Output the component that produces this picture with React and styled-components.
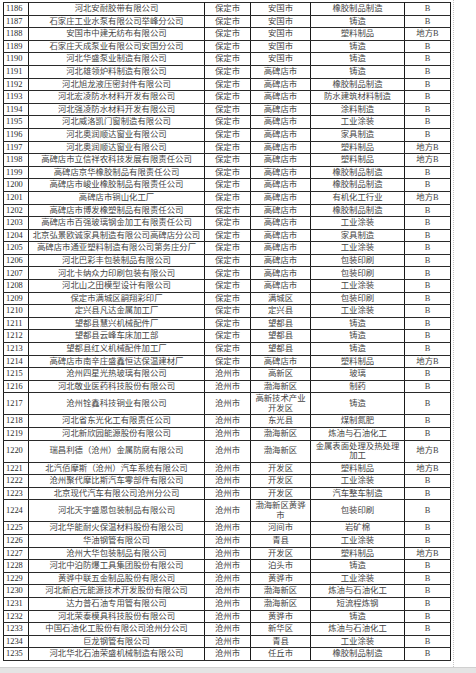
import React from 'react';
import styled, { createGlobalStyle } from 'styled-components';

const GlobalStyle = createGlobalStyle`
  html, body {
    margin: 0;
    padding: 0;
    background: #ffffff;
  }
`;

const Page = styled.div`
  width: 476px;
  height: 673px;
  overflow: hidden;
  background: #ffffff;
  display: flex;
  flex-direction: column;
`;

const Sheet = styled.div`
  width: 454px;
  height: 667px;
  padding: 2px 0 0 3px;
  box-sizing: border-box;
  border-right: 1px dotted #c4c4c4;
`;

const PageGap = styled.div`
  flex: 1;
  background: #e4e4e4;
  border-top: 1px solid #d0d0d0;
`;

const Table = styled.table`
  border-collapse: collapse;
  table-layout: fixed;
  width: 447px;
  font-family: "Liberation Serif", "Noto Sans CJK SC", serif;
  font-size: 8.4px;
  color: #454545;
  border-left: 1.5px solid #1a1a1a;
  border-right: 1.5px solid #1a1a1a;
`;

const Row = styled.tr`
  height: ${(p) => (p.$tall ? '22px' : '12.6px')};
`;

const Cell = styled.td`
  padding: 0 1px;
  border-top: 1px solid #2a2a2a;
  border-bottom: 1px solid #2a2a2a;
  border-right: ${(p) => (p.$heavy ? '1.5px' : '1px')} solid #1a1a1a;
  text-align: ${(p) => (p.$left ? 'left' : 'center')};
  padding-left: ${(p) => (p.$left ? '2px' : '1px')};
  color: ${(p) => (p.$left ? '#2a2a2a' : 'inherit')};
  line-height: 9.5px;
  white-space: nowrap;
  overflow: hidden;
  vertical-align: middle;
`;

const widths = [25, 176, 46, 60, 94, 46];

const rows = [
  ['1186', '河北安耐胶带有限公司', '保定市', '安国市', '橡胶制品制造', 'B'],
  ['1187', '石家庄工业水泵有限公司举峰分公司', '保定市', '安国市', '铸造', 'B'],
  ['1188', '安国市中建无纺布有限公司', '保定市', '安国市', '塑料制品', '地方B'],
  ['1189', '石家庄天成泵业有限公司安国分公司', '保定市', '安国市', '铸造', 'B'],
  ['1190', '河北华盛泵业制造有限公司', '保定市', '安国市', '铸造', 'B'],
  ['1191', '河北雄领炉料制造有限公司', '保定市', '高碑店市', '铸造', 'B'],
  ['1192', '河北旭龙液压密封件有限公司', '保定市', '高碑店市', '橡胶制品制造', 'B'],
  ['1193', '河北宏凌防水材料开发有限公司', '保定市', '高碑店市', '防水建筑材料制造', 'B'],
  ['1194', '河北强凌防水材料开发有限公司', '保定市', '高碑店市', '涂料制造', 'B'],
  ['1195', '河北威洛凯门窗制造有限公司', '保定市', '高碑店市', '工业涂装', 'B'],
  ['1196', '河北奥润顺达窗业有限公司', '保定市', '高碑店市', '家具制造', 'B'],
  ['1197', '河北奥润顺达窗业有限公司', '保定市', '高碑店市', '塑料制品', '地方B'],
  ['1198', '高碑店市立信祥农科技发展有限责任公司', '保定市', '高碑店市', '塑料制品', '地方B'],
  ['1199', '高碑店京华橡胶制品有限责任公司', '保定市', '高碑店市', '橡胶制品制造', 'B'],
  ['1200', '高碑店市峻业橡胶制品有限责任公司', '保定市', '高碑店市', '橡胶制品制造', 'B'],
  ['1201', '高碑店市铜山化工厂', '保定市', '高碑店市', '有机化工行业', '地方B'],
  ['1202', '高碑店市博发橡塑制品有限责任公司', '保定市', '高碑店市', '橡胶制品制造', 'B'],
  ['1203', '高碑店市百强玻璃钢金加工有限责任公司', '保定市', '高碑店市', '工业涂装', 'B'],
  ['1204', '北京弘景欧诚家具制造有限公司高碑店分公司', '保定市', '高碑店市', '家具制造', 'B'],
  ['1205', '高碑店市通亚塑料制造有限公司第务庄分厂', '保定市', '高碑店市', '工业涂装', 'B'],
  ['1206', '河北巴彩丰包装制品有限公司', '保定市', '高碑店市', '包装印刷', 'B'],
  ['1207', '河北卡纳众力印刷包装有限公司', '保定市', '高碑店市', '包装印刷', 'B'],
  ['1208', '河北山之田模型设计有限公司', '保定市', '高碑店市', '工业涂装', 'B'],
  ['1209', '保定市满城区嗣翔彩印厂', '保定市', '满城区', '包装印刷', 'B'],
  ['1210', '定兴县凡达金属加工厂', '保定市', '定兴县', '工业涂装', 'B'],
  ['1211', '望都县慧兴机械配件厂', '保定市', '望都县', '铸造', 'B'],
  ['1212', '望都县云峰车床加工部', '保定市', '望都县', '铸造', 'B'],
  ['1213', '望都县红义机械配件加工厂', '保定市', '望都县', '铸造', 'B'],
  ['1214', '高碑店市南辛庄盛鑫恒达保温建材厂', '保定市', '高碑店市', '塑料制品', '地方B'],
  ['1215', '沧州四星光热玻璃有限公司', '沧州市', '高新区', '玻璃', 'B'],
  ['1216', '河北敬业医药科技股份有限公司', '沧州市', '渤海新区', '制药', 'B'],
  ['1217', '沧州铨鑫科技铜业有限公司', '沧州市', ['高新技术产业', '开发区'], '铸造', 'B'],
  ['1218', '河北省东光化工有限责任公司', '沧州市', '东光县', '煤制氮肥', 'B'],
  ['1219', '河北新欣园能源股份有限公司', '沧州市', '渤海新区', '炼油与石油化工', 'B'],
  ['1220', '瑞昌利德（沧州）金属防腐有限公司', '沧州市', '渤海新区', ['金属表面处理及热处理', '加工'], '地方B'],
  ['1221', '北汽佰摩斯（沧州）汽车系统有限公司', '沧州市', '开发区', '塑料制品', '地方B'],
  ['1222', '沧州聚代摩比斯汽车零部件有限公司', '沧州市', '开发区', '工业涂装', 'B'],
  ['1223', '北京现代汽车有限公司沧州分公司', '沧州市', '开发区', '汽车整车制造', 'B'],
  ['1224', '河北天宇盛恩包装制品有限公司', '沧州市', ['渤海新区黄骅', '市'], '包装印刷', 'B'],
  ['1225', '河北华能耐火保温材料股份有限公司', '沧州市', '河间市', '岩矿棉', 'B'],
  ['1226', '华油钢管有限公司', '沧州市', '青县', '工业涂装', 'B'],
  ['1227', '沧州大华包装制品有限公司', '沧州市', '开发区', '塑料制品', '地方B'],
  ['1228', '河北中泊防爆工具集团股份有限公司', '沧州市', '泊头市', '铸造', 'B'],
  ['1229', '黄骅中联五金制品股份有限公司', '沧州市', '黄骅市', '工业涂装', 'B'],
  ['1230', '河北新启元能源技术开发股份有限公司', '沧州市', '渤海新区', '炼油与石油化工', 'B'],
  ['1231', '达力普石油专用管有限公司', '沧州市', '渤海新区', '短流程炼钢', 'B'],
  ['1232', '河北荣泰模具科技股份有限公司', '沧州市', '黄骅市', '铸造', 'B'],
  ['1233', '中国石油化工股份有限公司沧州分公司', '沧州市', '新华区', '炼油与石油化工', 'B'],
  ['1234', '巨龙钢管有限公司', '沧州市', '青县', '工业涂装', 'B'],
  ['1235', '河北华北石油荣盛机械制造有限公司', '沧州市', '任丘市', '橡胶制品制造', 'B'],
];

const renderText = (value) =>
  Array.isArray(value)
    ? value.map((line, i) => <div key={i}>{line}</div>)
    : value;

export default function App() {
  return (
    <>
      <GlobalStyle />
      <Page>
        <Sheet>
          <Table>
            <colgroup>
              {widths.map((w, i) => (
                <col key={i} style={{ width: w }} />
              ))}
            </colgroup>
            <tbody>
              {rows.map((r) => (
                <Row key={r[0]} $tall={r.some(Array.isArray)}>
                  <Cell $left>{r[0]}</Cell>
                  <Cell>{r[1]}</Cell>
                  <Cell $heavy>{r[2]}</Cell>
                  <Cell>{renderText(r[3])}</Cell>
                  <Cell>{renderText(r[4])}</Cell>
                  <Cell>{r[5]}</Cell>
                </Row>
              ))}
            </tbody>
          </Table>
        </Sheet>
        <PageGap />
      </Page>
    </>
  );
}
